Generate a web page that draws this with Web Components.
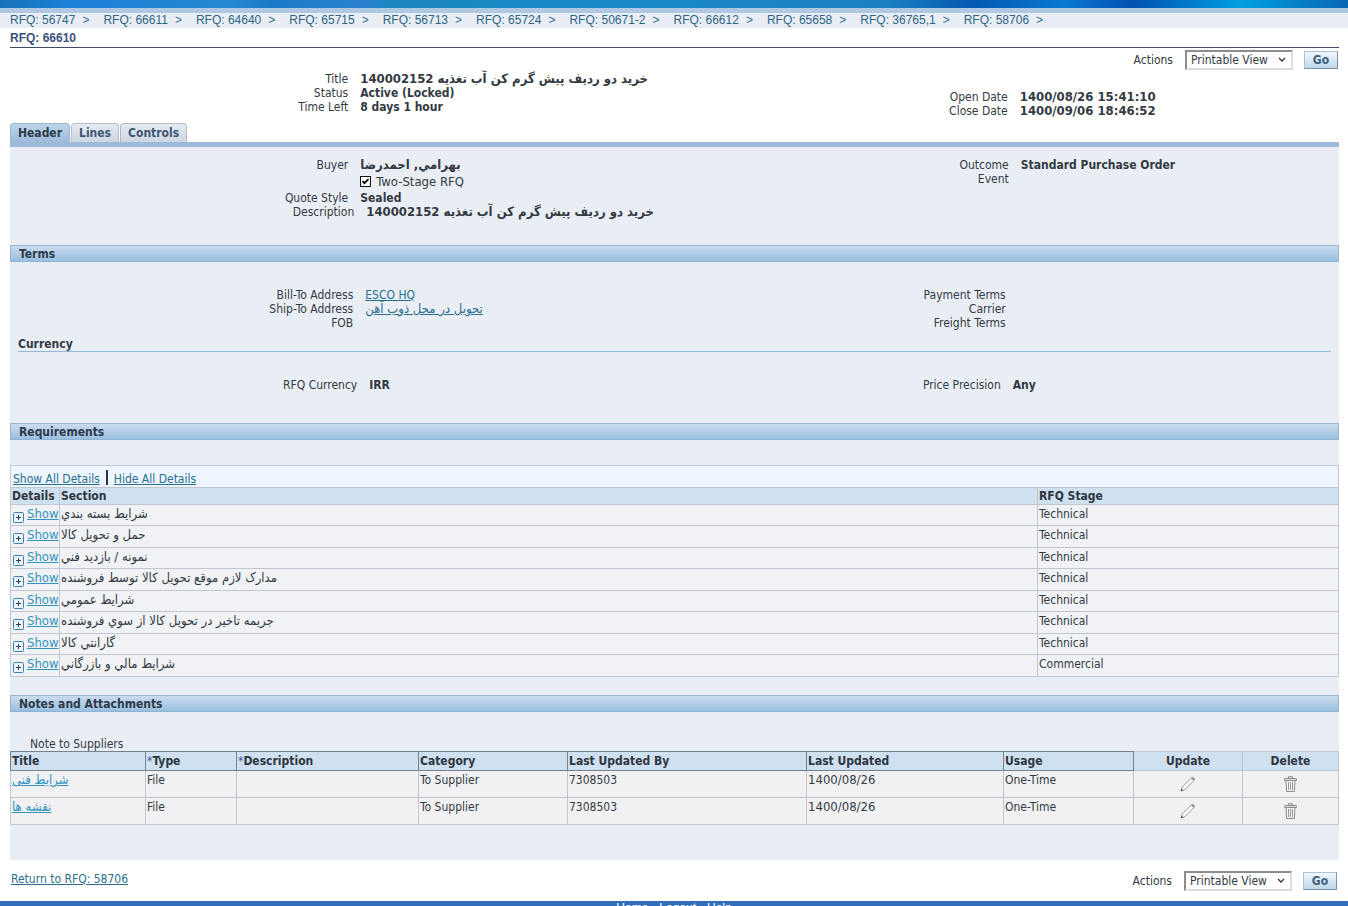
<!DOCTYPE html>
<html lang="en">
<head>
<meta charset="utf-8">
<title>RFQ: 66610</title>
<style>
  html, body { margin: 0; height: 100%; }
  body {
    display: flex; flex-direction: column; overflow: hidden; background: #fff; color: #333a42;
    font: 12px/14px "DejaVu Sans Condensed", "DejaVu Sans", Tahoma, sans-serif;
  }
  a { color: #2b6f8d; }
  main { flex: none; padding: 0 9px 0 10px; }
  .panel { background: #e9eef5; padding-bottom: 35px; }
  .foot { display: flex; justify-content: space-between; align-items: flex-start; padding: 12px 1px 11px; }
  .outcome { padding-top: 11px; }
  .terms { padding-top: 26px; }
  .price { padding-top: 26px; }
  .right-low { padding-top: 18px; }
  .note { margin: 25px 0 0 20px; }
</style>
</head>
<body>
<rfq-banner></rfq-banner>
<rfq-crumbs></rfq-crumbs>
<main>
  <rfq-title>RFQ: 66610</rfq-title>
  <rfq-actions></rfq-actions>
  <rfq-columns>
    <div style="--shift: 6px">
      <rfq-field label="Title" large>خريد دو رديف پيش گرم کن آب تغذيه 140002152</rfq-field>
      <rfq-field label="Status">Active (Locked)</rfq-field>
      <rfq-field label="Time Left">8 days 1 hour</rfq-field>
    </div>
    <div class="right-low" style="--shift: 1px">
      <rfq-field label="Open Date" large>1400/08/26 15:41:10</rfq-field>
      <rfq-field label="Close Date" large>1400/09/06 18:46:52</rfq-field>
    </div>
  </rfq-columns>
  <rfq-tabs></rfq-tabs>
  <div class="panel">
    <rfq-columns class="outcome">
      <div style="--shift: 6px">
        <rfq-field label="Buyer" large>بهرامي, احمدرضا</rfq-field>
        <rfq-field large><rfq-check>Two-Stage RFQ</rfq-check></rfq-field>
        <rfq-field label="Quote Style">Sealed</rfq-field>
        <rfq-field label="Description" large style="--shift: 12px">خريد دو رديف پيش گرم کن آب تغذيه 140002152</rfq-field>
      </div>
      <div style="--shift: 2px">
        <rfq-field label="Outcome">Standard Purchase Order</rfq-field>
        <rfq-field label="Event"></rfq-field>
      </div>
    </rfq-columns>
    <rfq-section gap="wide">Terms</rfq-section>
    <rfq-columns class="terms">
      <div style="--shift: 11px">
        <rfq-field label="Bill-To Address" plain><a href="#bill">ESCO HQ</a></rfq-field>
        <rfq-field label="Ship-To Address" plain large><a href="#ship">تحويل در محل ذوب آهن</a></rfq-field>
        <rfq-field label="FOB"></rfq-field>
      </div>
      <div style="--shift: -1px">
        <rfq-field label="Payment Terms"></rfq-field>
        <rfq-field label="Carrier"></rfq-field>
        <rfq-field label="Freight Terms"></rfq-field>
      </div>
    </rfq-columns>
    <rfq-subhead>Currency</rfq-subhead>
    <rfq-columns class="price">
      <div style="--shift: 15px"><rfq-field label="RFQ Currency">IRR</rfq-field></div>
      <div style="--shift: -6px"><rfq-field label="Price Precision">Any</rfq-field></div>
    </rfq-columns>
    <rfq-section gap="wider">Requirements</rfq-section>
    <rfq-requirements></rfq-requirements>
    <rfq-section>Notes and Attachments</rfq-section>
    <div class="note">Note to Suppliers</div>
    <rfq-notes></rfq-notes>
  </div>
  <div class="foot">
    <a href="#return">Return to RFQ: 58706</a>
    <rfq-actions low></rfq-actions>
  </div>
</main>
<rfq-footer></rfq-footer>

<script>
const define = (name, html) => customElements.define(name, class extends HTMLElement {
  connectedCallback() {
    if (this.shadowRoot) return;
    this.attachShadow({ mode: 'open' }).innerHTML = typeof html === 'function' ? html(this) : html;
  }
});

define('rfq-banner', `<style>
  :host { display: block; flex: none; height: 8px; border-bottom: 5px solid #b1c8e2;
    background: linear-gradient(90deg, #1773bb, #1b80d8 5%, #2489d2 17%, #1b78c8 20%, #2a80d0 27%, #1a86c0 29%, #1a8ac8 45%, #1a7fc0 66%, #0558b0 72%, #0a78d0 79%, #0350b0 84%, #009fe0 92%, #0a66b5) padding-box; }
</style>`);

const crumbs = ['56747', '66611', '64640', '65715', '56713', '65724', '50671-2', '66612', '65658', '36765,1', '58706'];
define('rfq-crumbs', `<style>
  :host { display: block; flex: none; background: #e9edf4; font: 12px/15px "Liberation Sans", Arial, sans-serif; }
  nav { display: flex; gap: 14px; padding: 0 10px; white-space: nowrap; }
  span { display: flex; gap: 7px; color: #35708f; }
  a { color: #2b6687; text-decoration: none; }
</style><nav>${crumbs.map(c => `<span><a href="#${c}">RFQ: ${c}</a>&gt;</span>`).join('')}</nav>`);

define('rfq-title', `<style>
  :host { display: block; border-bottom: 1px solid #3e4c6c; }
  h1 { margin: 0; padding: 3px 0 2px; font: bold 12px/14px "Liberation Sans", Arial, sans-serif; color: #3a527c; }
</style><h1><slot></slot></h1>`);

define('rfq-actions', `<style>
  :host { display: flex; justify-content: flex-end; align-items: center; height: 18px; margin-top: 3px; padding-right: 1px; }
  :host([low]) { margin: 0; }
  label { margin-right: 12px; }
  .pick { display: grid; margin-right: 11px; }
  select { grid-area: 1 / 1; appearance: none; box-sizing: border-box; width: 108px; height: 20px; margin: 0; padding: 0 4px; border: 2px solid; border-color: #8c8c8c #dcdcdc #dcdcdc #8c8c8c; border-radius: 0; background: #fff; color: #333a42; font: inherit; }
  svg { grid-area: 1 / 1; justify-self: end; align-self: center; margin-right: 7px; pointer-events: none; }
  button { box-sizing: border-box; width: 34px; height: 18px; margin: 0; padding: 0; border: 1px solid; border-color: #a9c2da #7c92aa #7c92aa #a9c2da; border-radius: 0; background: linear-gradient(#f2f8fc, #bdd7e9); color: #3d5f80; font: inherit; font-weight: bold; }
</style>
<label for="act">Actions</label>
<span class="pick"><select id="act"><option>Printable View</option></select>
<svg width="8" height="6" viewBox="0 0 8 6"><path d="M1 1l3 3 3-3" fill="none" stroke="#333" stroke-width="1.3"/></svg></span>
<button type="button">Go</button>`);

define('rfq-columns', `<style>
  :host { display: grid; grid-template-columns: 1fr 1fr; padding-top: 3px; }
</style><slot></slot>`);

define('rfq-field', el => `<style>
  :host { display: grid; grid-template-columns: calc(50% + var(--shift, 0px)) 1fr; column-gap: 12px; min-height: 14px; white-space: nowrap; }
  .name { text-align: right; }
  .value { font-weight: bold; }
  :host([plain]) .value { font-weight: normal; }
  :host([large]) .value { font-size: 13px; }
</style><span class="name">${el.getAttribute('label') || ''}</span><span class="value"><slot></slot></span>`);

define('rfq-check', `<style>
  :host { display: flex; align-items: center; height: 19px; font-weight: normal; }
  input { appearance: none; box-sizing: border-box; width: 11px; height: 11px; margin: 0 5px 0 0; border: 1px solid #111; background: #fff; }
  input:checked { background: #fff url("data:image/svg+xml,%3Csvg xmlns='http://www.w3.org/2000/svg' viewBox='0 0 9 9'%3E%3Cpath d='M1.5 4l2 2.2L7.5 2' fill='none' stroke='%23000' stroke-width='1.8'/%3E%3C/svg%3E") center / 9px 9px no-repeat; }
</style><input type="checkbox" id="c" checked><label for="c"><slot></slot></label>`);

define('rfq-tabs', `<style>
  :host { display: block; margin-top: 5px; border-bottom: 5px solid #9dbad9; }
  nav { display: flex; gap: 1px; }
  a { box-sizing: border-box; height: 19px; padding: 2px 7px; border: 1px solid #b3bdc9; border-bottom: 0; border-radius: 4px 4px 0 0; background: linear-gradient(#e6ebf2, #ccd6e1); color: #3f5674; font-weight: bold; text-decoration: none; }
  a.on { border-color: #9ab6d0; background: linear-gradient(#bdd5ea, #9dbad9); color: #2d3a48; }
</style><nav><a class="on" href="#header">Header</a><a href="#lines">Lines</a><a href="#controls">Controls</a></nav>`);

define('rfq-section', `<style>
  :host { display: block; margin-top: 18px; }
  :host([gap="wide"]) { margin-top: 26px; }
  :host([gap="wider"]) { margin-top: 31px; }
  h2 { box-sizing: border-box; height: 17px; margin: 0; padding: 1px 8px; border: 1px solid #9bb4cc; border-bottom-color: #8fb3d5; background: linear-gradient(#c9dcee, #9bbfe0); color: #2d3a48; font: inherit; line-height: 14px; font-weight: bold; }
</style><h2><slot></slot></h2>`);

define('rfq-subhead', `<style>
  :host { display: block; margin: 7px 8px 0; border-bottom: 1px solid #94b8da; }
  h3 { margin: 0; font: inherit; font-weight: bold; }
</style><h3><slot></slot></h3>`);

const sections = [
  ['شرايط بسته بندي', 'Technical'], ['حمل و تحويل کالا', 'Technical'], ['نمونه / بازديد فني', 'Technical'],
  ['مدارک لازم موقع تحويل کالا توسط فروشنده', 'Technical'], ['شرايط عمومي', 'Technical'],
  ['جريمه تاخير در تحويل کالا از سوي فروشنده', 'Technical'], ['گارانتي کالا', 'Technical'], ['شرايط مالي و بازرگاني', 'Commercial']];
const plus = `<svg width="11" height="11" viewBox="0 0 11 11"><rect x=".5" y=".5" width="10" height="10" rx="1" fill="#e8f3fb" stroke="#3f7fa8"/><path d="M3 5.5h5M5.5 3v5" stroke="#2c4258"/></svg>`;
define('rfq-requirements', `<style>
  :host { display: block; margin-top: 25px; }
  .tools { display: flex; align-items: center; gap: 6px; height: 21px; padding: 0 2px; border: 1px solid #c3cad3; border-bottom: 0; background: #edf5fe; }
  .tools a { color: #2b6f8d; margin-top: 4px; }
  .tools i { width: 2px; height: 15px; margin-top: 1px; background: #2d3440; }
  table { width: 100%; table-layout: fixed; border-collapse: collapse; }
  th, td { padding: 0 1px; border: 1px solid #c1c7d0; text-align: left; vertical-align: top; white-space: nowrap; }
  th { height: 16px; line-height: 16px; background: #cfe0f0; color: #2d3640; }
  td { height: 20px; line-height: 18px; background: #f1f2f5; }
  tbody tr:nth-child(even) td { height: 21px; }
  td:first-child { padding: 0 0 0 2px; }
  td div { display: flex; gap: 3px; }
  td svg { margin-top: 7px; flex: none; }
  td a, td.fa { font-size: 13px; }
  td a { color: #3294bd; }
  .d { width: 49px; } .s { width: 301px; }
</style>
<div class="tools"><a href="#show">Show All Details</a><i></i><a href="#hide">Hide All Details</a></div>
<table><colgroup><col class="d"><col><col class="s"></colgroup>
<thead><tr><th>Details</th><th>Section</th><th>RFQ Stage</th></tr></thead>
<tbody>${sections.map(([s, g]) => `<tr><td><div>${plus}<a href="#s">Show</a></div></td><td class="fa">${s}</td><td>${g}</td></tr>`).join('')}</tbody></table>`);

const pencil = `<svg width="16" height="16" viewBox="0 0 16 16"><path d="M1 15l1.2-4L11.5 1.8q1-1 2.3.2t.2 2.4L5 13.6z" fill="#fafafa" stroke="#9a9a9a"/><path d="M11 2.5l2.6 2.6 1.2-2-2-1.9z" fill="#999"/><path d="M.8 15.2l.8-2.4 1.7 1.5z" fill="#444"/></svg>`;
const bin = `<svg width="13" height="16" viewBox="0 0 13 16"><path d="M2 4.5h9l-.6 11H2.600z" fill="#f3f3f3" stroke="#8a8a8a"/><path d="M4.5 6v8M6.500 6v8M8.500 6v8" stroke="#9a9a9a"/><path d="M.5 4.500v-1.300q0-.7.8-.7h10.400q.8 0 .8.7v1.300z" fill="#ddd" stroke="#8a8a8a"/><path d="M4.500 2V.700h4V2" fill="none" stroke="#8a8a8a"/></svg>`;
const noteColumns = [135, 91, 182, 149, 239, 197, 130, 109];
define('rfq-notes', `<style>
  :host { display: block; }
  table { width: 100%; table-layout: fixed; border-collapse: collapse; }
  th, td { padding: 0 1px; border: 1px solid #c1c7d0; text-align: left; vertical-align: top; white-space: nowrap; }
  th { height: 17px; line-height: 18px; background: #cfe0f0; color: #2d3640; padding-bottom: 0; }
  th.sort { border-color: #76838f; }
  th b { color: #3a62a8; font-weight: normal; }
  td { height: 26px; line-height: 18px; background: #f1f1f4; }
  td a, td.date { font-size: 13px; }
  td a { color: #3294bd; }
  .c { text-align: center; }
  td.c svg { display: block; margin: 5px auto 0; }
</style>
<table><colgroup>${noteColumns.map(w => `<col style="width:${w}px">`).join('')}<col></colgroup>
<thead><tr><th class="sort">Title</th><th class="sort"><b>*</b>Type</th><th class="sort"><b>*</b>Description</th><th class="sort">Category</th><th class="sort">Last Updated By</th><th class="sort">Last Updated</th><th class="sort">Usage</th><th class="c">Update</th><th class="c">Delete</th></tr></thead>
<tbody>${['شرايط فنی', 'نقشه ها'].map(t => `<tr><td><a href="#n">${t}</a></td><td>File</td><td></td><td>To Supplier</td><td>7308503</td><td class="date">1400/08/26</td><td>One-Time</td><td class="c">${pencil}</td><td class="c">${bin}</td></tr>`).join('')}</tbody></table>`);

define('rfq-footer', `<style>
  :host { display: block; flex: 1 0 30px; background: #316fbd; }
  nav { display: flex; justify-content: center; gap: 11px; font: 12px/14px "Liberation Sans", Arial, sans-serif; }
  a { color: #fff; text-decoration: none; }
</style><nav><a href="#home">Home</a><a href="#logout">Logout</a><a href="#help">Help</a></nav>`);
</script>
</body>
</html>
